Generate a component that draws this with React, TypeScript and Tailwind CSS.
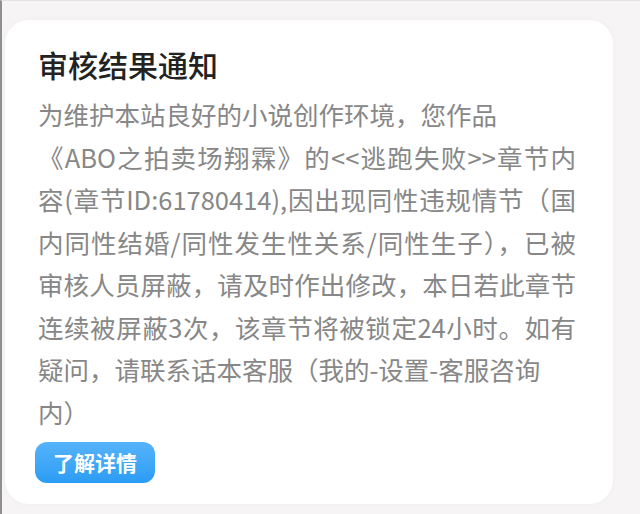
const lines = [
  { t: '为维护本站良好的小说创作环境，您作品', fill: false },
  { t: '《ABO之拍卖场翔霖》的<<逃跑失败>>章节内', fill: true },
  { t: '容(章节ID:61780414),因出现同性违规情节（国', fill: true },
  { t: '内同性结婚/同性发生性关系/同性生子），已被', fill: true },
  { t: '审核人员屏蔽，请及时作出修改，本日若此章节', fill: true },
  { t: '连续被屏蔽3次，该章节将被锁定24小时。如有', fill: true },
  { t: '疑问，请联系话本客服（我的-设置-客服咨询', fill: false },
  { t: '内）', fill: false },
];

export default function App() {
  return (
    <div
      className="w-[640px] h-[514px] overflow-hidden bg-[#f6f4f4] border-l-2 border-t border-l-[#8f8f8f] border-t-[#e2e2e2] pt-[19px] pl-[3px]"
      style={{ fontFamily: '"Noto Sans CJK SC", "Noto Sans", sans-serif' }}
    >
      <div className="w-[608px] rounded-[24px] bg-white pt-[24px] pb-[21px] pl-[33px] shadow-[0_0_6px_rgba(0,0,0,0.03)]">
        {/* title */}
        <h1 className="text-[30px] leading-[40px] font-medium text-[#222222]">审核结果通知</h1>

        {/* body */}
        <div className="mt-[9px] w-[538px] text-[25.5px] leading-[42.5px] text-[#878787] whitespace-nowrap">
          {lines.map((l, i) => (
            <div key={i} className={l.fill ? 'text-justify [text-align-last:justify]' : ''}>
              {l.t}
            </div>
          ))}
        </div>

        <button className="mt-[9px] ml-[-3px] h-[41px] w-[120px] rounded-[12px] bg-gradient-to-b from-[#55b3fa] to-[#2a9cf5] text-white text-[21px] font-bold leading-none">
          了解详情
        </button>
      </div>
    </div>
  );
}
